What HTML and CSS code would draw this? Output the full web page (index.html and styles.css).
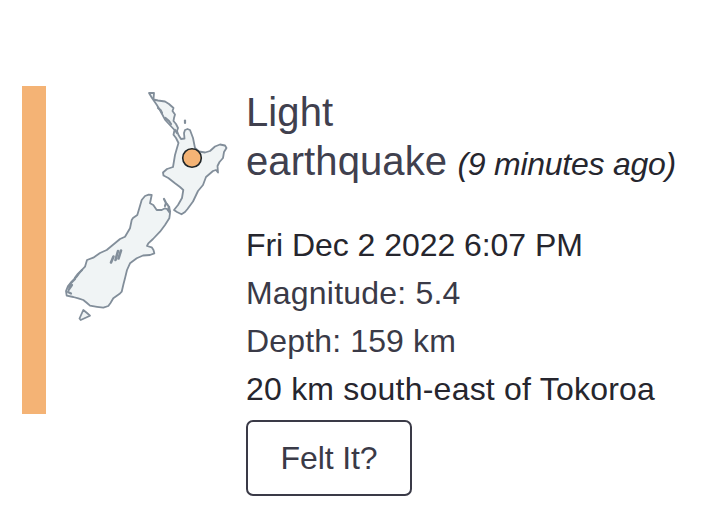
FILE: index.html
```html
<!DOCTYPE html>
<html lang="en">
<head>
<meta charset="utf-8">
<title>Light earthquake</title>
<link rel="stylesheet" href="styles.css">
</head>
<body>
<main class="quake">
  <div class="bar"></div>
  <svg class="map" viewBox="46 86 200 240" width="200" height="240" aria-hidden="true">
    <g class="land">
      <path d="M149 93 L154 93 L153.5 99.5 L158 100.5 L165 101.5 L169 104 L173.5 108 L172.5 111 L175 114.5 L174 118 L173.5 121 L176 124 L178 128 L177 131 L178.5 135 L181 139 L184.5 138.5 L184 133 L185 130 L187.5 129 L190 130 L191.5 134 L193 138 L195 148 L199 151.5 L205 152.5 L210 151 L215 146.5 L220 144.5 L225 145.5 L226.5 148 L224 152 L223 158 L219.5 162 L217.5 166 L218 172.5 L216 170 L213 171 L206 177 L204.5 181 L203 185 L198 191 L193 201.5 L187.5 209 L185 212 L181.5 214.3 L177 212 L174 210 L178 205 L182 198 L183.3 190 L180 187 L175 183.3 L168.3 178 L163.5 175.5 L163 172.5 L167 169 L173 167 L175 155 L177 148 L178.5 143 L176 138 L173.5 134.7 L174.5 130 L168 123 L165 119.7 L161 112 L156.7 104.7 L152 98 Z"/>
      <path d="M148.7 194.7 L145 196 L141.7 200 L139.3 208.3 L137.3 215 L133 218 L131.7 220 L130 228.3 L125 236.7 L120 239 L116.7 241.7 L106.7 250 L100 253 L93.3 257.7 L87 260 L85 266.7 L80 272 L76.7 276.7 L71.7 281.7 L68 286 L66 291 L66.7 295.7 L73.3 297 L78.3 298.3 L83.3 300 L87 303 L90 305.7 L97 306.8 L103.3 307.7 L108.3 306 L110.5 303 L113.3 298.3 L120 293.5 L121.7 291.7 L123.5 284 L125 278.3 L127 270 L130 263.3 L136.7 258.3 L143 255.5 L150 255 L154.3 253.3 L153.5 250 L151.7 247.3 L147 246 L148.3 243.3 L153 239 L160 231.7 L165 225 L169.3 218.3 L170 213.3 L167 209 L165 208.3 L161.7 210 L156.7 210 L153.3 205 L150 203.3 L151.7 195 Z"/>
      <path d="M83.3 310 L87 313 L90 315.7 L84 318.5 L80.7 320 L79.5 318.5 Z"/>
    </g>
    <g class="detail">
      <path d="M185 120.5 L185 123"/>
      <path d="M158 108 L160.5 110 L162 113"/>
      <path d="M165.5 118 L169 121 L171 124"/>
      <path d="M175 130 L177 133"/>
      <path d="M164 199 L166 203 L165 206"/>
      <path d="M167 204 L169 207 L168 210"/>
      <path d="M169 207 L170 212"/>
      <path d="M82 270 L78 274 L75 278"/>
      <path d="M75 279 L71 283 L69 287"/>
      <path d="M72 285 L68.5 290"/>
      <path d="M68 292 L71 293.5"/>
    </g>
    <g class="lakes">
      <path d="M111 262.5 L113.5 256.5"/>
      <path d="M115.5 260 L118 251"/>
      <path d="M118.5 258.5 L121 250.5"/>
    </g>
    <circle class="pin" cx="192" cy="158" r="9.3"/>
  </svg>
  <section class="info">
    <h1 class="title">Light<br>earthquake <em class="ago">(9 minutes ago)</em></h1>
    <p class="row row-dark row-date">Fri Dec 2 2022 6:07 PM</p>
    <p class="row row-mag">Magnitude: 5.4</p>
    <p class="row row-depth">Depth: 159 km</p>
    <p class="row row-dark row-place">20 km south-east of Tokoroa</p>
    <button class="felt" type="button">Felt It?</button>
  </section>
</main>
</body>
</html>
```
FILE: styles.css
```css
html, body {
  margin: 0;
  padding: 0;
  background: #fff;
}
body {
  font-family: "Liberation Sans", Arial, sans-serif;
  color: #3a3a47;
}
.quake {
  display: flex;
  align-items: flex-start;
  padding: 86px 0 0 22px;
}
.bar {
  flex: none;
  width: 24px;
  height: 328px;
  background: #f4b375;
}
.map {
  flex: none;
  display: block;
}
.land path {
  fill: #f0f4f5;
  stroke: #828e9a;
  stroke-width: 1.8;
  stroke-linejoin: round;
}
.detail path {
  fill: none;
  stroke: #828e9a;
  stroke-width: 2.2;
  stroke-linecap: round;
  stroke-linejoin: round;
}
.lakes path {
  fill: none;
  stroke: #828e9a;
  stroke-width: 2.6;
  stroke-linecap: round;
}
.pin {
  fill: #f4b375;
  stroke: #1f2528;
  stroke-width: 1.6;
}
.info {
  flex: none;
  margin-top: 2px;
}
.title {
  margin: 0 0 32px;
  font-size: 40px;
  font-weight: 400;
  line-height: 49px;
  letter-spacing: 0.1px;
  color: #40404e;
}
.ago {
  margin-left: -1px;
  font-size: 32px;
  letter-spacing: -0.25px;
  color: #26262e;
}
.row {
  margin: 0;
  font-size: 32px;
  line-height: 48px;
}
.row-dark {
  color: #26262e;
}
.row-date {
  letter-spacing: -0.05px;
}
.row-mag {
  letter-spacing: 0.2px;
}
.row-depth {
  letter-spacing: 0.15px;
}
.row-place {
  letter-spacing: 0.22px;
}
.felt {
  display: block;
  box-sizing: border-box;
  width: 166px;
  height: 76px;
  margin-top: 7px;
  padding: 0;
  background: #fff;
  border: 2px solid #3a3a47;
  border-radius: 7px;
  font: inherit;
  font-size: 32px;
  letter-spacing: -0.1px;
  color: #3a3a47;
}
```
